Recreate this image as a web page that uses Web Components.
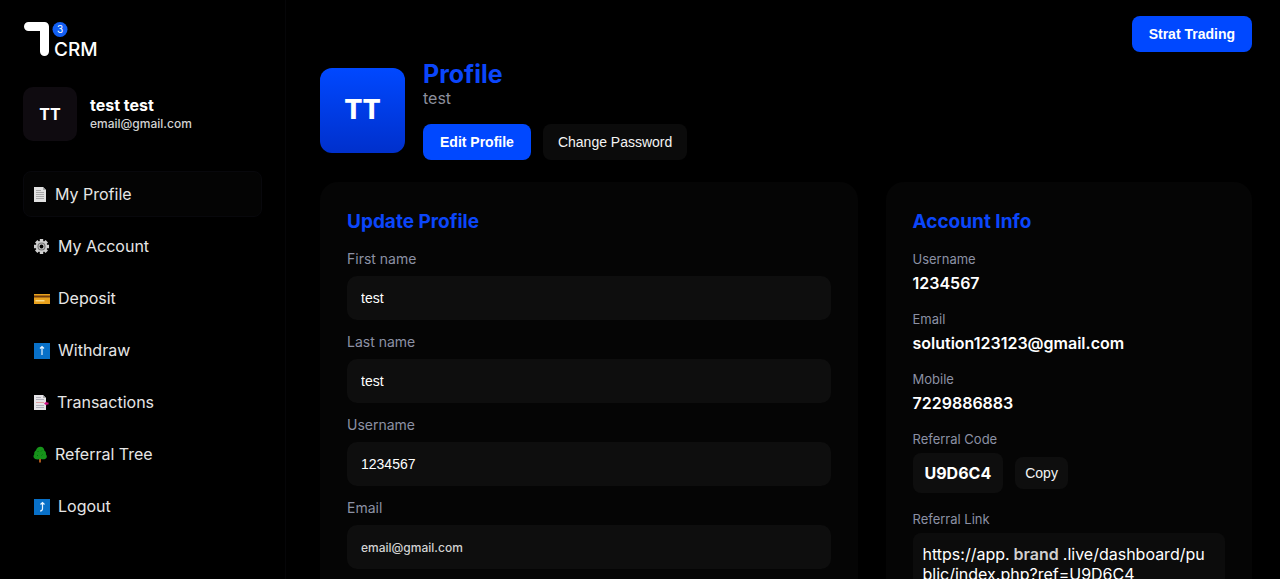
<!DOCTYPE html>
<html lang="en">
<head>
<meta charset="utf-8">
<title>CRM – My Profile</title>
<style>
  html { background: #000; scrollbar-width: none; }
  body { margin: 0; background: #000; color: #fff; font: 16px/20px Inter, "Liberation Sans", sans-serif; }
</style>
</head>
<body>
<crm-app>
  <crm-sidebar slot="side">
    <crm-logo slot="logo"></crm-logo>
    <crm-user slot="user" initials="TT" name="test test" email="email@gmail.com"></crm-user>
    <crm-nav-item icon="page" active>My Profile</crm-nav-item>
    <crm-nav-item icon="gear">My Account</crm-nav-item>
    <crm-nav-item icon="card">Deposit</crm-nav-item>
    <crm-nav-item icon="up">Withdraw</crm-nav-item>
    <crm-nav-item icon="tabs">Transactions</crm-nav-item>
    <crm-nav-item icon="tree">Referral Tree</crm-nav-item>
    <crm-nav-item icon="out">Logout</crm-nav-item>
  </crm-sidebar>
  <crm-button slot="top" kind="primary">Strat Trading</crm-button>
  <crm-profile-head initials="TT" heading="Profile" sub="test">
    <crm-button kind="primary">Edit Profile</crm-button>
    <crm-button>Change Password</crm-button>
  </crm-profile-head>
  <crm-columns>
    <crm-card heading="Update Profile">
      <crm-field label="First name" value="test"></crm-field>
      <crm-field label="Last name" value="test"></crm-field>
      <crm-field label="Username" value="1234567"></crm-field>
      <crm-field label="Email" type="email" value="email@gmail.com"></crm-field>
    </crm-card>
    <crm-card heading="Account Info">
      <crm-info label="Username">1234567</crm-info>
      <crm-info label="Email">solution123123@gmail.com</crm-info>
      <crm-info label="Mobile">7229886883</crm-info>
      <crm-info label="Referral Code"><crm-code>U9D6C4</crm-code></crm-info>
      <crm-info label="Referral Link"><crm-link></crm-link></crm-info>
    </crm-card>
  </crm-columns>
</crm-app>
<script>
const define = (name, render) => customElements.define(name, class extends HTMLElement {
  connectedCallback() {
    if (this.shadowRoot) return;
    this.attachShadow({ mode: 'open' }).innerHTML =
      '<style>*{box-sizing:border-box}:host{display:block;box-sizing:border-box}</style>' + render(this);
  }
});
const attr = (el, name) => el.getAttribute(name) || '';

const icons = {
  page: `<svg width="14" height="17" viewBox="0 0 14 17"><path d="M1 1h9l3 3v12H1z" fill="#e2e2e2"/><path d="M10 1v3h3z" fill="#aaa"/><path d="M3 4.500h5M3 6.500h8M3 8.500h8M3 10.500h8M3 12.500h8" stroke="#a8a8a8"/></svg>`,
  gear: `<svg width="17" height="17" viewBox="0 0 17 17"><g stroke="#cfcfcf" stroke-width="3.400"><path d="M8.500 1v15M1 8.500h15M3.200 3.200l10.600 10.600M13.800 3.200L3.200 13.800"/></g><circle cx="8.500" cy="8.500" r="5.800" fill="#cfcfcf"/><circle cx="8.500" cy="8.500" r="3.500" fill="#c4c4c4" stroke="#777" stroke-width="1.200"/><circle cx="8.500" cy="8.500" r="1.900" fill="#000"/></svg>`,
  card: `<svg width="17" height="17" viewBox="0 0 17 17"><rect x="1" y="4" width="16" height="10" fill="#e9a11c"/><path d="M1 5.500h16v2H1z" fill="#6f3b0d"/><path d="M2.500 10.700h9" stroke="#f8dc8c" stroke-width="1.500"/></svg>`,
  up: `<svg width="17" height="17" viewBox="0 0 17 17"><rect x="1" y="1" width="16" height="16" fill="#0870c8"/><path d="M9 13V4.500M7 6.500l2-2 2 2" fill="none" stroke="#e8f4ff" stroke-width="1.200"/></svg>`,
  tabs: `<svg width="16" height="17" viewBox="0 0 16 17"><path d="M1 1h9l3 3v12H1z" fill="#e6e4e8"/><path d="M10 1v3h3z" fill="#aaa"/><path d="M3 3.500h5M3 5.500h8M3 11.500h8M3 13.500h8" stroke="#b0b0ba"/><path d="M3 8.500h8" stroke="#dca2a2"/><path d="M11 9.500l2.500-2v1h2v2h-2v1z" fill="#d8148c"/></svg>`,
  tree: `<svg width="14" height="17" viewBox="0 0 14 17"><path d="M7 11v5.500" stroke="#a8551c" stroke-width="2"/><path d="M8 .8c2.500.6 3.200 2 3.300 3.800 1.500 1 1.800 2.300 1.600 3.600 1.600 1.800 1.100 4-.8 4.800-1.500.6-3.500.4-4.600-.2-1.800.9-4.200.7-5.400.1C.2 11.800 0 9.800 1.300 8.200 1 6.500 1.600 5.500 2.900 4.600 3.500 2.200 5.500.5 8 .8z" fill="#16931a"/><path d="M4.500 5l1 1M9 4.500l-1 1M4 9l1 1M9.500 8.500l-1 1" stroke="#0a6410"/></svg>`,
  out: `<svg width="17" height="17" viewBox="0 0 17 17"><rect x="1" y="1" width="16" height="16" fill="#0870c8"/><path d="M7 13c1.600 0 2.500-.8 2.500-2.500v-6M7.500 6.500l2-2 2 2" fill="none" stroke="#e8f4ff" stroke-width="1.200"/></svg>`
};

define('crm-app', () => `<style>
  :host{display:grid;grid-template-columns:286px minmax(0,1fr);min-height:100vh}
  main{display:flex;flex-direction:column;padding:16px 28px 28px 34px}
  header{display:flex;justify-content:flex-end;margin-bottom:8px}
</style><slot name="side"></slot><main><header><slot name="top"></slot></header><slot></slot></main>`);

define('crm-sidebar', () => `<style>
  :host{border-right:1px solid #060608;padding:20px 23px}
  nav{display:flex;flex-direction:column;gap:6px;margin-top:30px}
</style><slot name="logo"></slot><slot name="user"></slot><nav><slot></slot></nav>`);

define('crm-logo', () => `<style>
  :host{height:40px;margin-bottom:27px}
  svg{display:block} text{font-family:Inter,sans-serif;fill:#fff}
</style><svg width="80" height="40" viewBox="0 0 80 40" role="img" aria-label="CRM logo">
  <path d="M5.500 6.500H21.500V31.500" fill="none" stroke="#fff" stroke-width="9" stroke-linecap="round" stroke-linejoin="round"/>
  <circle cx="37" cy="9.500" r="7.500" fill="#125ff5"/>
  <text x="34" y="13" font-size="10">3</text>
  <text x="31" y="36" font-size="19" font-weight="500">CRM</text>
</svg>`);

define('crm-user', el => `<style>
  :host{display:flex;align-items:center;gap:13px}
  .pic{display:grid;place-items:center;width:54px;height:54px;border-radius:10px;background:#0f0b10;font-weight:700}
  .name{font-weight:700}
  .mail{font:500 12px/18px Inter,sans-serif;color:#d2d2d2}
</style><div class="pic">${attr(el, 'initials')}</div>
<div><div class="name">${attr(el, 'name')}</div><div class="mail">${attr(el, 'email')}</div></div>`);

define('crm-nav-item', el => `<style>
  a{display:flex;align-items:center;gap:8px;height:46px;padding:0 9px;border:1px solid transparent;border-radius:8px;color:#e6e6e6;font-size:16px;text-decoration:none}
  :host([active]) a{background:#040404;border-color:#08080c}
  svg{display:block;flex:none}
</style><a href="#">${icons[attr(el, 'icon')]}<span><slot></slot></span></a>`);

define('crm-button', el => `<style>
  button{display:block;height:36px;padding:0 15px;border:0;border-radius:8px;background:#0b0b0b;color:#f4f4f4;font:14px/20px "Liberation Sans",Arial,sans-serif}
  :host([kind=primary]) button{padding:0 17px;background:#0048ff;color:#fff;font-weight:700}
  :host([kind=small]) button{height:32px;padding:0 10px;background:#0e0e0e}
</style><button type="button"><slot></slot></button>`);

define('crm-profile-head', el => `<style>
  :host{display:flex;align-items:center;gap:18px;margin-bottom:22px}
  .pic{display:grid;place-items:center;width:85px;height:85px;border-radius:12px;background:linear-gradient(#0048ff,#0030cc);font-size:27px;font-weight:800}
  h1{margin:0;font-size:25px;line-height:28px;font-weight:700;color:#0b46fb}
  p{margin:0 0 16px;color:#8c8f9c}
  .row{display:flex;gap:12px}
</style><div class="pic">${attr(el, 'initials')}</div>
<div><h1>${attr(el, 'heading')}</h1><p>${attr(el, 'sub')}</p><div class="row"><slot></slot></div></div>`);

define('crm-columns', () => `<style>
  :host{display:grid;grid-template-columns:minmax(0,22fr) minmax(0,15fr);gap:28px}
</style><slot></slot>`);

define('crm-card', el => `<style>
  :host{padding:27px;border-radius:18px;background:#050505}
  h2{margin:0 0 14px;font-size:19px;line-height:26px;font-weight:700;color:#0b46fb}
</style><h2>${attr(el, 'heading')}</h2><slot></slot>`);

define('crm-field', el => `<style>
  :host{margin-bottom:12px}
  label{display:block;margin-bottom:7px;font-size:14px;color:#8c91a4}
  input{display:block;width:100%;height:44px;padding:0 14px;border:0;border-radius:10px;background:#0e0e0e;color:#fff;font:14px/20px "Liberation Sans",Arial,sans-serif}
  input[type=email]{font:500 12px/20px Inter,sans-serif;color:#d2d2d2}
</style><label for="f">${attr(el, 'label')}</label><input id="f" type="${attr(el, 'type') || 'text'}" value="${attr(el, 'value')}">`);

define('crm-info', el => `<style>
  :host{margin-bottom:16px}
  .label{margin-bottom:4px;font-size:13px;color:#8c91a4}
  .value{font-weight:600}
</style><div class="label">${attr(el, 'label')}</div><div class="value"><slot></slot></div>`);

define('crm-code', () => `<style>
  :host{display:flex;align-items:center;gap:12px}
  .chip{padding:10px 12px;border-radius:8px;background:#0e0e0e;font-weight:700}
</style><span class="chip"><slot></slot></span><crm-button kind="small">Copy</crm-button>`);

define('crm-link', () => `<style>
  :host{padding:11px 14px 11px 10px;border-radius:8px;background:#0c0c0c;font-weight:400;word-break:break-all}
  b{margin:0 4px;font-weight:600;color:#d0d0d0}
</style>https://app.<b>brand</b>.live/dashboard/public/index.php?ref=U9D6C4`);
</script>
</body>
</html>
